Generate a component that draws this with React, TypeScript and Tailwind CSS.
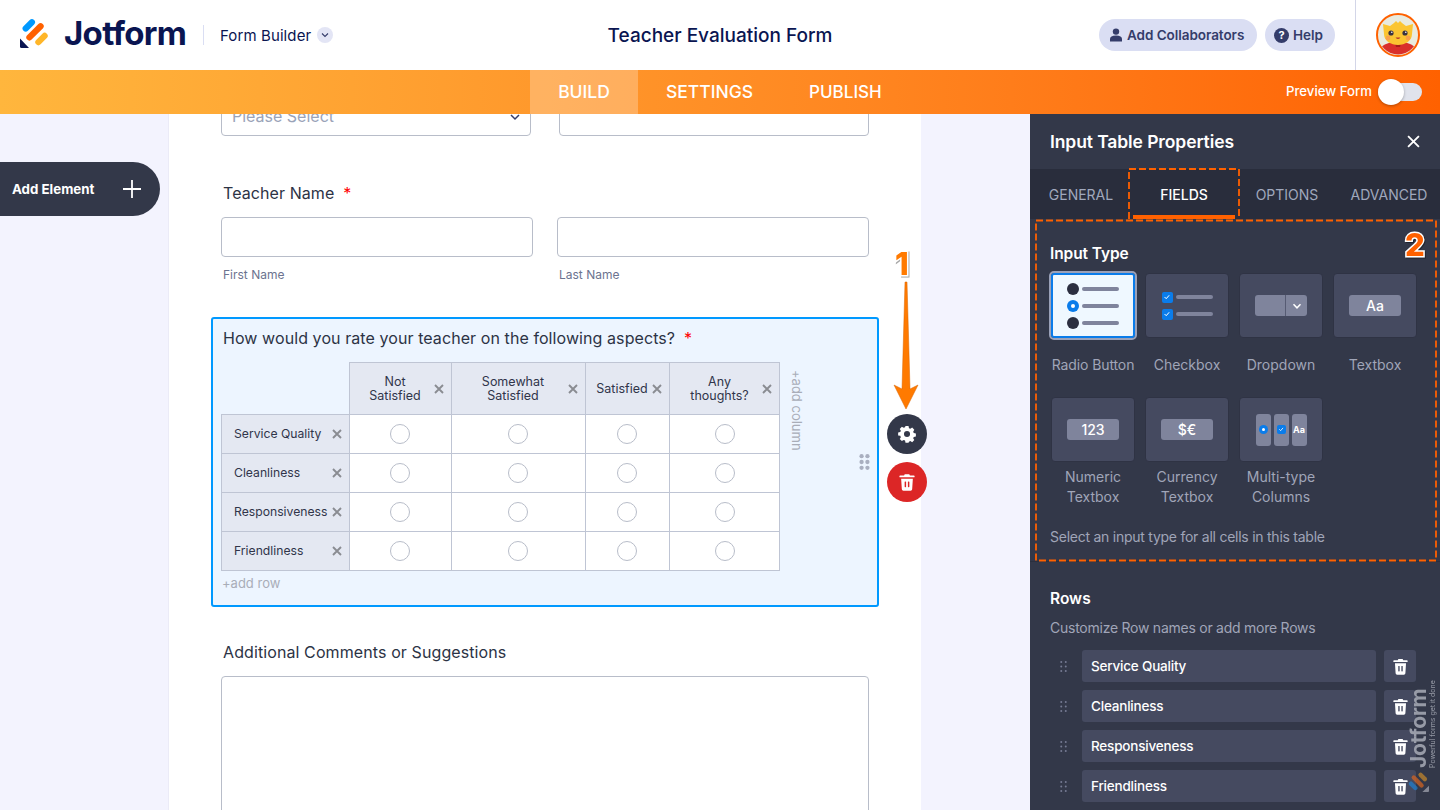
import React from "react";

const Logo = ({ className, navy = "#0a1551", a = "#0099ff", b = "#ff6100", c = "#ffb629" }: any) => (
  <svg viewBox="0 0 30 30" className={className}>
    <rect x="-7.5" y="-3.1" width="15" height="6.2" rx="3.1" transform="translate(8.8 7.4) rotate(-45)" fill={a} />
    <rect x="-11" y="-3.1" width="22" height="6.2" rx="3.1" transform="translate(15 13.8) rotate(-45)" fill={b} />
    <rect x="-7.5" y="-3.1" width="15" height="6.2" rx="3.1" transform="translate(21.5 21) rotate(-45)" fill={c} />
    <path d="M0 20.5 L9 30 H1.5 A1.5 1.5 0 0 1 0 28.5 Z" fill={navy} />
  </svg>
);

const Avatar = () => (
  <svg viewBox="0 0 44 44" className="w-[44px] h-[44px]">
    <defs>
      <clipPath id="av"><circle cx="22" cy="22" r="19.5" /></clipPath>
    </defs>
    <circle cx="22" cy="22" r="21" fill="#e9ebdf" stroke="#ff6100" strokeWidth="2" />
    <g clipPath="url(#av)">
      <path d="M3 44 L5 34 C10 30 15 29 22 29 C29 29 34 30 39 34 L41 44 Z" fill="#d9302b" />
      <path d="M19 30 h6 l-1 4 h-4z" fill="#a81e1a" />
      <path d="M7 11 L14 13 L18 10 L20 8 L22 10 L24 8 L26 10 L30 13 L37 11 L36 21 C36 28 29 32 22 32 C15 32 8 28 8 21 Z" fill="#fbc531" />
      <circle cx="15" cy="20" r="2.6" fill="#3a3340" />
      <circle cx="15.8" cy="19.2" r=".8" fill="#fff" />
      <circle cx="29" cy="20" r="2.6" fill="#3a3340" />
      <circle cx="29.8" cy="19.2" r=".8" fill="#fff" />
      <circle cx="12" cy="25" r="2.4" fill="#f9a24b" />
      <circle cx="32" cy="25" r="2.4" fill="#f9a24b" />
      <path d="M19.500 24.500 Q22 27.500 24.500 24.500 Z" fill="#b2382c" />
    </g>
  </svg>
);

const Trash = ({ className = "", hole = "#454a60" }: any) => (
  <svg viewBox="0 0 14 16" className={className}>
    <path d="M1 2.200h3.400L5 1h4l.6 1.200H13a.6.6 0 0 1 0 1.600H1a.6.6 0 0 1 0-1.600Z" fill="#fff" />
    <path d="M1.800 5h10.400l-.6 9.400a1.400 1.400 0 0 1-1.400 1.300H3.800a1.400 1.400 0 0 1-1.400-1.300Z" fill="#fff" />
    <rect x="4.900" y="7.600" width="1.300" height="5" rx=".5" fill={hole} />
    <rect x="7.800" y="7.600" width="1.300" height="5" rx=".5" fill={hole} />
  </svg>
);

const Dots = ({ className = "", fill = "#757b93", r = 1.1, gap = 5 }: any) => (
  <svg viewBox={`0 0 ${gap + 2 * r} ${2 * gap + 2 * r}`} className={className}>
    {[0, 1].map((x) => [0, 1, 2].map((y) => <circle key={`${x}${y}`} cx={r + x * gap} cy={r + y * gap} r={r} fill={fill} />))}
  </svg>
);

const XIcon = ({ className = "" }: any) => (
  <svg viewBox="0 0 10 10" className={className}>
    <path d="M1 1 9 9M9 1 1 9" stroke="#8a8c92" strokeWidth="1.9" fill="none" />
  </svg>
);

const Radio = () => <span className="block w-[20px] h-[20px] rounded-full bg-white border border-[#b8bdc9]" />;

const Tile = ({ children, selected }: any) => (
  <div
    className={
      selected
        ? "w-[84px] h-[65px] flex items-center justify-center rounded-[3px] bg-[#eff8ff] border-2 border-[#0a7cea] outline-2 outline-[#9ba1b8]"
        : "w-[84px] h-[65px] flex items-center justify-center rounded-[4px] bg-[#454a60] border border-[#2f3344]"
    }
  >
    {children}
  </div>
);

const Check = ({ className = "" }: any) => (
  <span className={`flex items-center justify-center rounded-[2px] bg-[#0a7cea] ${className}`}>
    <svg viewBox="0 0 10 10" className="w-[70%] h-[70%]"><path d="M2 5.200 4.200 7.400 8 3" stroke="#fff" strokeWidth="1.300" fill="none" /></svg>
  </span>
);

const GrayBox = ({ children }: any) => (
  <div className="w-[52px] h-[21px] rounded-[3px] bg-[#7f849c] flex items-center justify-center text-white text-[14px] font-medium leading-none">{children}</div>
);

const RadioLines = () => (
  <div className="flex flex-col gap-[5px]">
    {[0, 1, 2].map((i) => (
      <div key={i} className="flex items-center gap-[3px]">
        {i === 1 ? (
          <span className="w-[12px] h-[12px] rounded-full bg-[#0a7cea] flex items-center justify-center"><span className="w-[4px] h-[4px] rounded-full bg-white" /></span>
        ) : (
          <span className="w-[12px] h-[12px] rounded-full bg-[#2b2f40]" />
        )}
        <span className="w-[37px] h-[4px] rounded-full bg-[#7f849c]" />
      </div>
    ))}
  </div>
);

const cols = [
  { w: "w-[102px]", lines: ["Not", "Satisfied"], ml: "ml-[1px]", pad: "pr-[2px]" },
  { w: "w-[134px]", lines: ["Somewhat", "Satisfied"], ml: "ml-[1px]", pad: "pr-[2px]" },
  { w: "w-[84px]", lines: ["Satisfied"], ml: "ml-[1px]", pad: "pr-[2px]" },
  { w: "w-[111px]", lines: ["Any", "thoughts?"], ml: "ml-[2px]", pad: "" },
];
const rows = ["Service Quality", "Cleanliness", "Responsiveness", "Friendliness"];
const sans = "font-['Inter',sans-serif]";

function Table() {
  return (
    <div className="w-[559px] text-[#343c6a]">
      <div className="flex h-[53px]">
        <div className="w-[128px] border-b border-[#bfc5d4]" />
        {cols.map((c, i) => (
          <div key={i} className={`${c.w} relative flex items-center justify-center bg-[#e4e8f2] border-t border-l border-b border-[#bfc5d4] ${i === 3 ? "border-r" : ""} text-[12.5px] leading-[14px] text-[#30354a] text-center pr-[12px]`}>
            <div className={c.ml}>{c.lines.map((l) => <div key={l}>{l}</div>)}</div>
            <XIcon className="absolute right-[7px] top-[21px] w-[10px] h-[10px]" />
          </div>
        ))}
      </div>
      {rows.map((r) => (
        <div key={r} className="flex h-[39px]">
          <div className="w-[128px] relative flex items-center pl-[12px] bg-[#e4e8f2] border-l border-b border-[#bfc5d4] text-[12.2px] text-[#30354a]">
            {r}
            <XIcon className="absolute right-[7px] top-[14px] w-[10px] h-[10px]" />
          </div>
          {cols.map((c, i) => (
            <div key={i} className={`${c.w} bg-white flex items-center justify-center border-l border-b border-[#bfc5d4] ${c.pad} ${i === 3 ? "border-r" : ""}`}>
              <Radio />
            </div>
          ))}
        </div>
      ))}
    </div>
  );
}

const Input = ({ className = "" }: any) => <div className={`h-[40px] bg-white border border-[#b8bdc9] rounded-[4px] ${className}`} />;

export default function App() {
  return (
    <div className={`w-[1440px] h-[810px] overflow-hidden flex flex-col bg-[#f3f3fe] relative ${sans}`}>
      {/* header */}
      <header className="h-[70px] bg-white flex items-center shrink-0 relative">
        <div className="w-[30px] ml-[20px] mt-[-4px]"><Logo className="w-[30px] h-[30px]" /></div>
        <span className="ml-[14px] w-[125px] whitespace-nowrap text-[#0a1551] text-[33px] leading-none font-bold tracking-[-0.7px] mt-[-3px]">Jotform</span>
        <span className="ml-[14px] w-px h-[20px] bg-[#dadef3]" />
        <span className="ml-[16px] mt-[2px] text-[15px] text-[#0a1551] tracking-[0.1px]">Form Builder</span>
        <span className="ml-[6px] w-[16px] h-[16px] rounded-full bg-[#e3e5f5] flex items-center justify-center">
          <svg viewBox="0 0 10 10" className="w-[10px] h-[10px]"><path d="M2 3.500 5 6.500 8 3.500" stroke="#343c6a" strokeWidth="1.100" fill="none" /></svg>
        </span>
        <div className="absolute left-0 right-0 top-[23px] text-center text-[19px] leading-[26px] font-medium text-[#0a1551] pointer-events-none">Teacher Evaluation Form</div>
        <div className="ml-auto flex items-center">
          <div className="flex items-center gap-[8px]">
            <div className="h-[32px] w-[158px] rounded-full bg-[#dadef3] flex items-center pl-[10px] text-[#343c6a] text-[13.5px] font-semibold">
              <svg viewBox="0 0 14 14" className="w-[14px] h-[14px] mr-[4px]"><circle cx="7" cy="3.600" r="3.200" fill="#343c6a" /><path d="M1 13.500V11c0-2 2-3.500 6-3.500s6 1.500 6 3.500v2.500Z" fill="#343c6a" /></svg>
              <span className="tracking-[-0.05px]">Add Collaborators</span>
            </div>
            <div className="h-[32px] w-[70px] rounded-full bg-[#dadef3] flex items-center pl-[9px] text-[#343c6a] text-[13.5px] font-semibold">
              <span className="w-[15px] h-[15px] rounded-full bg-[#343c6a] text-white text-[11px] font-bold flex items-center justify-center mr-[4px]">?</span>
              <span>Help</span>
            </div>
          </div>
          <div className="ml-[20px] w-px h-[70px] bg-[#d3d6e8]" />
          <div className="ml-[20px] mr-[20px]"><Avatar /></div>
        </div>
      </header>

      {/* orange bar */}
      <nav className="h-[44px] shrink-0 bg-gradient-to-r from-[#ffb63d] to-[#ff6100] flex items-center text-white relative">
        <div className="ml-[530px] w-[108px] h-full bg-white/25 flex items-center justify-center text-[17.5px] font-medium">BUILD</div>
        <div className="ml-[28px] text-[17.5px] font-medium">SETTINGS</div>
        <div className="ml-[56px] text-[17px] font-medium mt-[1px]">PUBLISH</div>
        <div className="ml-auto mr-[18px] flex items-center">
          <span className="text-[13.2px] font-medium mr-[6px]">Preview Form</span>
          <div className="relative w-[44px] h-[18px] rounded-full bg-[#e0e3ec]">
            <span className="absolute left-0 -top-[4px] w-[26px] h-[26px] rounded-full bg-white shadow-[0_1px_3px_rgba(0,0,0,0.3)]" />
          </div>
        </div>
      </nav>

      {/* body */}
      <div className="flex-1 flex min-h-0">
        <aside className="w-[168px] shrink-0 pt-[48px]">
          <div className="w-[160px] h-[54px] rounded-r-full bg-[#333849] flex items-center pl-[12px] text-white text-[13.3px] font-bold">
            <span className="mt-[1px]">Add Element</span>
            <svg viewBox="0 0 20 20" className="w-[20px] h-[20px] ml-[28px]"><path d="M10 1v18M1 10h18" stroke="#fff" strokeWidth="1.800" /></svg>
          </div>
        </aside>

        <main className="w-[753px] shrink-0 bg-white overflow-hidden border-l border-[#ebebf7] relative">
          <div className="mt-[-18px] pl-[52px]">
            <div className="flex gap-[28px]">
              <div className="w-[310px] h-[40px] bg-white border border-[#b8bdc9] rounded-[4px] flex items-center pl-[10px] text-[#9aa3b8] text-[16px] relative">
                Please Select
                <svg viewBox="0 0 12 12" className="w-[12px] h-[12px] absolute right-[9px] top-[14px]"><path d="M2 4 6 8 10 4" stroke="#343c6a" strokeWidth="1.500" fill="none" /></svg>
              </div>
              <Input className="w-[310px]" />
            </div>

            <div className="mt-[46px] ml-[2px] text-[16px] tracking-[0.08px] text-[#2c3345] h-[22px] leading-[22px]">Teacher Name<span className="ml-[9px] text-[#f00]">*</span></div>
            <div className="mt-[13px] flex gap-[24px]">
              <Input className="w-[312px]" />
              <Input className="w-[312px]" />
            </div>
            <div className="mt-[10px] flex text-[12px] text-[#6c738f] leading-[16px]">
              <span className="ml-[2px] w-[336px]">First Name</span>
              <span>Last Name</span>
            </div>

            <section className="mt-[34px] ml-[-10px] w-[668px] h-[290px] rounded-[3px] border-2 border-[#0099ff] bg-[#edf5ff] pl-[8px] relative">
              <div className="mt-[8px] ml-[2px] text-[16px] tracking-[0.08px] h-[22px] leading-[22px] text-[#2c3345]">How would you rate your teacher on the following aspects?<span className="ml-[9px] text-[#f00]">*</span></div>
              <div className="mt-[13px]"><Table /></div>
              <div className="mt-[3px] ml-[1px] text-[13px] text-[#a9adb8] leading-[18px]">+add row</div>
              <div className="absolute left-[575px] top-[51px] text-[13px] text-[#a9adb8] leading-[18px] [writing-mode:vertical-rl]">+add column</div>
              <Dots className="absolute right-[7px] top-[135px] w-[11px] h-[16px]" fill="#a9afc0" r={2.200} gap={6} />
            </section>

            <div className="mt-[34px] ml-[2px] text-[16px] tracking-[0.1px] h-[22px] leading-[22px] text-[#2c3345]">Additional Comments or Suggestions</div>
            <Input className="mt-[13px] w-[648px] !h-[200px]" />
          </div>
        </main>

        <div className="w-[109px] shrink-0" />

        {/* right panel */}
        <aside className="w-[410px] shrink-0 bg-[#333849] text-white relative overflow-hidden">
          <div className="h-[55px] flex items-center pl-[20px] pr-[20px] justify-between">
            <span className="text-[17.5px] font-semibold tracking-[-0.1px] mt-[1px]">Input Table Properties</span>
            <svg viewBox="0 0 12 12" className="w-[13px] h-[13px]"><path d="M1 1 11 11M11 1 1 11" stroke="#fff" strokeWidth="1.700" /></svg>
          </div>
          <div className="h-[50px] bg-[#292d3c] flex text-[14px] text-[#a0a8bd]">
            {["GENERAL", "FIELDS", "OPTIONS", "ADVANCED"].map((t, i) => (
              <div key={t} className={`flex-1 flex items-center justify-center ${i === 1 ? "text-white font-medium border-b-4 border-[#ff6100] mx-[1px] pt-[4px]" : ""}`}>{t}</div>
            ))}
          </div>
          <div className="pl-[20px] pt-[25px]">
            <div className="text-[15.5px] font-semibold leading-[20px] tracking-[-0.1px]">Input Type</div>
            <div className="mt-[9px] ml-[1px] grid grid-cols-[84px_84px_84px_84px] gap-x-[10px]">
              <div className="flex flex-col items-center">
                <Tile selected><RadioLines /></Tile>
                <div className="mt-[17px] text-[14px] leading-[20px] text-[#a0a5b8] whitespace-nowrap tracking-[-0.1px]">Radio Button</div>
              </div>
              <div className="flex flex-col items-center">
                <Tile>
                  <div className="flex flex-col gap-[6px]">
                    {[0, 1].map((i) => (
                      <div key={i} className="flex items-center gap-[3px]"><Check className="w-[11px] h-[11px]" /><span className="w-[37px] h-[4px] rounded-full bg-[#7f849c]" /></div>
                    ))}
                  </div>
                </Tile>
                <div className="mt-[17px] text-[14px] leading-[20px] text-[#a0a5b8]">Checkbox</div>
              </div>
              <div className="flex flex-col items-center">
                <Tile>
                  <div className="w-[52px] h-[21px] rounded-[3px] bg-[#7f849c] flex justify-end">
                    <div className="w-[22px] h-full border-l border-[#565b73] flex items-center justify-center">
                      <svg viewBox="0 0 10 10" className="w-[10px] h-[10px]"><path d="M1.500 3.200 5 6.800 8.500 3.200" stroke="#fff" strokeWidth="1.500" fill="none" /></svg>
                    </div>
                  </div>
                </Tile>
                <div className="mt-[17px] text-[14px] leading-[20px] text-[#a0a5b8]">Dropdown</div>
              </div>
              <div className="flex flex-col items-center">
                <Tile><GrayBox>Aa</GrayBox></Tile>
                <div className="mt-[17px] text-[14px] leading-[20px] text-[#a0a5b8]">Textbox</div>
              </div>
              <div className="flex flex-col items-center mt-[22px]">
                <Tile><GrayBox>123</GrayBox></Tile>
                <div className="mt-[5px] text-[14px] leading-[20px] text-[#a0a5b8] text-center">Numeric<br />Textbox</div>
              </div>
              <div className="flex flex-col items-center mt-[22px]">
                <Tile><GrayBox>$€</GrayBox></Tile>
                <div className="mt-[5px] text-[14px] leading-[20px] text-[#a0a5b8] text-center">Currency<br />Textbox</div>
              </div>
              <div className="flex flex-col items-center mt-[22px]">
                <Tile>
                  <div className="flex gap-[3px]">
                    <div className="w-[15px] h-[32px] rounded-[3px] bg-[#7f849c] flex items-center justify-center"><span className="w-[9px] h-[9px] rounded-full bg-[#0a7cea] flex items-center justify-center"><span className="w-[3px] h-[3px] rounded-full bg-white" /></span></div>
                    <div className="w-[15px] h-[32px] rounded-[3px] bg-[#7f849c] flex items-center justify-center"><Check className="w-[9px] h-[9px]" /></div>
                    <div className="w-[15px] h-[32px] rounded-[3px] bg-[#7f849c] flex items-center justify-center text-[9px] font-bold">Aa</div>
                  </div>
                </Tile>
                <div className="mt-[5px] text-[14px] leading-[20px] text-[#a0a5b8] text-center">Multi-type<br />Columns</div>
              </div>
            </div>
            <div className="mt-[20px] text-[14px] leading-[20px] text-[#a0a5b8] tracking-[-0.25px]">Select an input type for all cells in this table</div>
          </div>

          <div className="mt-[14px] h-px bg-[#2b2f3f]" />
          <div className="pl-[20px] pt-[27px]">
            <div className="text-[15.5px] font-semibold leading-[20px]">Rows</div>
            <div className="mt-[9px] text-[14px] leading-[20px] text-[#a0a5b8] tracking-[-0.25px]">Customize Row names or add more Rows</div>
            <div className="mt-[12px] flex flex-col gap-[8px]">
              {rows.map((r) => (
                <div key={r} className="flex items-center">
                  <Dots className="ml-[10px] w-[7px] h-[11px]" />
                  <div className="ml-[15px] w-[294px] h-[32px] rounded-[3px] bg-[#454a60] flex items-center pl-[9px] text-[13.5px] tracking-[-0.2px] font-medium">{r}</div>
                  <div className="ml-[8px] w-[32px] h-[32px] rounded-[3px] bg-[#454a60] flex items-center justify-center"><Trash className="w-[15px] h-[17px]" /></div>
                </div>
              ))}
            </div>
          </div>

          {/* Jotform watermark */}
          <div className="absolute left-[380px] top-[578px] h-[76px] w-[26px] flex flex-col items-start justify-start [writing-mode:vertical-rl] rotate-180 pointer-events-none">
            <span className="text-[21px] leading-[18px] font-bold text-[#a8abb6]/85 tracking-[-0.2px]">Jotform</span>
            <span className="text-[7px] leading-[9px] text-[#a8abb6]/85 whitespace-nowrap">Powerful forms get it done</span>
          </div>
          <div className="absolute left-[378px] top-[657px] pointer-events-none opacity-70 -rotate-90">
            <Logo className="w-[21px] h-[21px]" a="#1f7fd0" b="#d9651f" c="#c98a2b" navy="#a8abb6" />
          </div>
        </aside>
      </div>

      {/* annotations */}
      <svg viewBox="0 0 406 396" className="absolute left-[1034px] top-[167px] w-[406px] h-[396px] pointer-events-none" fill="none">
        <path d="M95 52 V2 H205 V52 M2 53.500 H402 V393.500 H2 Z" stroke="#ff6100" strokeWidth="1.800" strokeDasharray="7 3" />
      </svg>
      <div className="absolute left-[1405px] top-[227px] text-[#ff6100] text-[31px] leading-[36px] font-extrabold [-webkit-text-stroke:3px_#fff] [paint-order:stroke_fill] drop-shadow-[1px_1px_0_rgba(0,0,0,0.35)]">2</div>
      <div className="absolute left-[895px] top-[246px] text-[#ff7a00] text-[31px] leading-[36px] font-extrabold [-webkit-text-stroke:3px_#fff] [paint-order:stroke_fill] drop-shadow-[1px_1px_0_rgba(0,0,0,0.35)]">1</div>
      <svg viewBox="0 0 30 130" className="absolute left-[891px] top-[281px] w-[30px] h-[130px]">
        <path d="M14 1 H16 L19 108 L27 104 L15 128 L3 104 L11 108 Z" fill="#ff7a00" stroke="#d96400" strokeWidth=".5" />
      </svg>

      <div className="absolute left-[887px] top-[414px] w-[40px] h-[40px] rounded-full bg-[#333849] flex items-center justify-center">
        <svg viewBox="0 0 24 24" className="w-[20px] h-[20px]">
          <path fill="#fff" fillRule="evenodd" d="M10 2h4l.6 2.800 1.800.8 2.400-1.500 2.800 2.900-1.500 2.400.8 1.800 2.800.6v4l-2.800.6-.8 1.800 1.500 2.400-2.800 2.800-2.400-1.500-1.800.8L14 24h-4l-.6-2.800-1.800-.8-2.400 1.500-2.800-2.800 1.500-2.400-.8-1.800L.3 14.600v-4l2.800-.6.8-1.800L2.400 5.800l2.800-2.900 2.400 1.500 1.800-.8ZM12 8.600a4 4 0 1 0 0 8 4 4 0 0 0 0-8Z" transform="translate(1.100 .6) scale(.91)" />
        </svg>
      </div>
      <div className="absolute left-[887px] top-[462px] w-[40px] h-[40px] rounded-full bg-[#dc2626] flex items-center justify-center">
        <Trash className="w-[16px] h-[18px]" hole="#dc2626" />
      </div>
    </div>
  );
}
